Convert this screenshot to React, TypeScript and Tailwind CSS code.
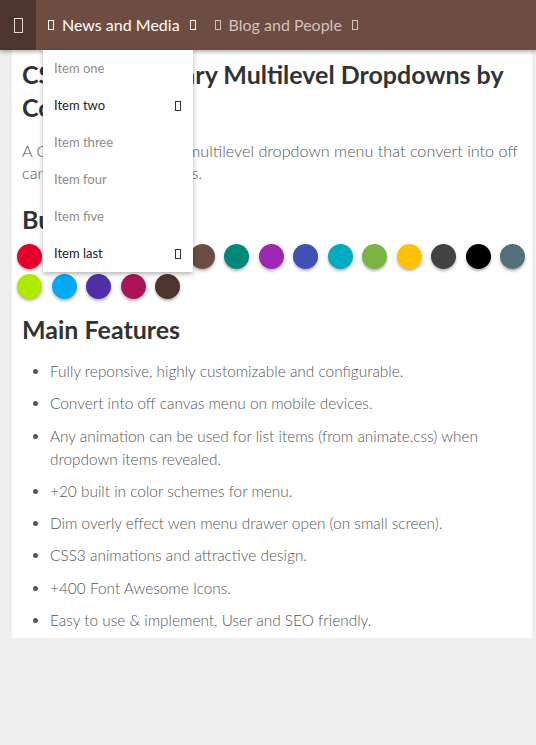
import React from "react";

const Tofu = ({ w = 6, h = 10, className = "" }: { w?: number; h?: number; className?: string }) => (
  <span
    className={`inline-block border border-current align-middle ${className}`}
    style={{ width: w, height: h }}
  />
);

const colors1 = [
  "#e4002b", "#e91e63", "#ff5722", "#ff9800", "#f44336",
  "#6d4c41", "#00897b", "#9c27b0", "#3f51b5", "#00acc1",
  "#7cb342", "#ffc107", "#424242", "#000000", "#546e7a",
];
const colors2 = ["#aeea00", "#03a9f4", "#512da8", "#ad1457", "#4e342e"];

const features = [
  "Fully reponsive, highly customizable and configurable.",
  "Convert into off canvas menu on mobile devices.",
  "Any animation can be used for list items (from animate.css) when dropdown items revealed.",
  "+20 built in color schemes for menu.",
  "Dim overly effect wen menu drawer open (on small screen).",
  "CSS3 animations and attractive design.",
  "+400 Font Awesome Icons.",
  "Easy to use & implement, User and SEO friendly.",
];

const items = [
  { label: "Item one", dark: false, sub: false },
  { label: "Item two", dark: true, sub: true },
  { label: "Item three", dark: false, sub: false },
  { label: "Item four", dark: false, sub: false },
  { label: "Item five", dark: false, sub: false },
  { label: "Item last", dark: true, sub: true },
];

export default function App() {
  return (
    <div
      className="min-h-[745px] bg-[#eeeeee]"
      style={{ fontFamily: 'Lato, "Open Sans", sans-serif' }}
    >
      <nav className="relative z-20 flex h-[50px] bg-[#6d4c41] shadow-[0_2px_4px_rgba(0,0,0,0.3)]">
        <div className="flex w-[36px] items-center justify-center bg-[#4e342e] text-[#e0d6d2]">
          <Tofu w={9} h={15} />
        </div>
        <div className="relative flex items-center pl-[12px] text-[16px] text-white">
          <Tofu w={6} h={10} />
          <span className="ml-[8px] font-normal">News and Media</span>
          <Tofu w={6} h={10} className="ml-[10px]" />
          <div className="absolute left-[7px] top-[50px] w-[150px] bg-white shadow-[0_2px_5px_rgba(0,0,0,0.3)]">
            {items.map((it) => (
              <div
                key={it.label}
                className={`flex h-[37px] items-center justify-between pl-[11px] pr-[12px] text-[13px] ${
                  it.dark ? "text-[#222]" : "text-[#8c8c8c]"
                }`}
              >
                <span>{it.label}</span>
                {it.sub && <Tofu w={6} h={10} className="text-[#333]" />}
              </div>
            ))}
          </div>
        </div>
        <div className="flex items-center pl-[19px] text-[16px] text-[#d0c2bd]">
          <Tofu w={6} h={10} />
          <span className="ml-[8px]">Blog and People</span>
          <Tofu w={6} h={10} className="ml-[10px]" />
        </div>
      </nav>

      <main className="ml-[12px] -mt-[2px] w-[520px] bg-white px-[10px] pb-[6px] pt-[10px] text-[#333]">
        <h1 className="text-[25px] font-bold leading-[33px]">
          CSS3 Icon Library Multilevel Dropdowns by Codehim
        </h1>
        <p className="mt-[16px] text-[16.2px] font-light leading-[22px] text-[#555]">
          A CSS3 responsive and multilevel dropdown menu that convert into off canvas on mobile devices.
        </p>
        <h2 className="mt-[19px] text-[25px] font-bold leading-[33px]">Built-in Colors</h2>
        <div className="-ml-[5px] -mr-[10px] mt-[8px] flex flex-wrap gap-x-[9.5px] gap-y-[5px]">
          {[...colors1, ...colors2].map((c, i) => (
            <span
              key={i}
              className="inline-block h-[25px] w-[25px] rounded-full shadow-[0_2px_3px_rgba(0,0,0,0.3)]"
              style={{ backgroundColor: c }}
            />
          ))}
        </div>
        <h2 className="mt-[14px] text-[25px] font-bold leading-[33px]">Main Features</h2>
        <ul className="mt-[14px] list-disc pl-[28px] text-[15.4px] font-light leading-[23px] text-[#555]">
          {features.map((f) => (
            <li key={f} className="mb-[9.3px] last:mb-0">
              {f}
            </li>
          ))}
        </ul>
      </main>
    </div>
  );
}
